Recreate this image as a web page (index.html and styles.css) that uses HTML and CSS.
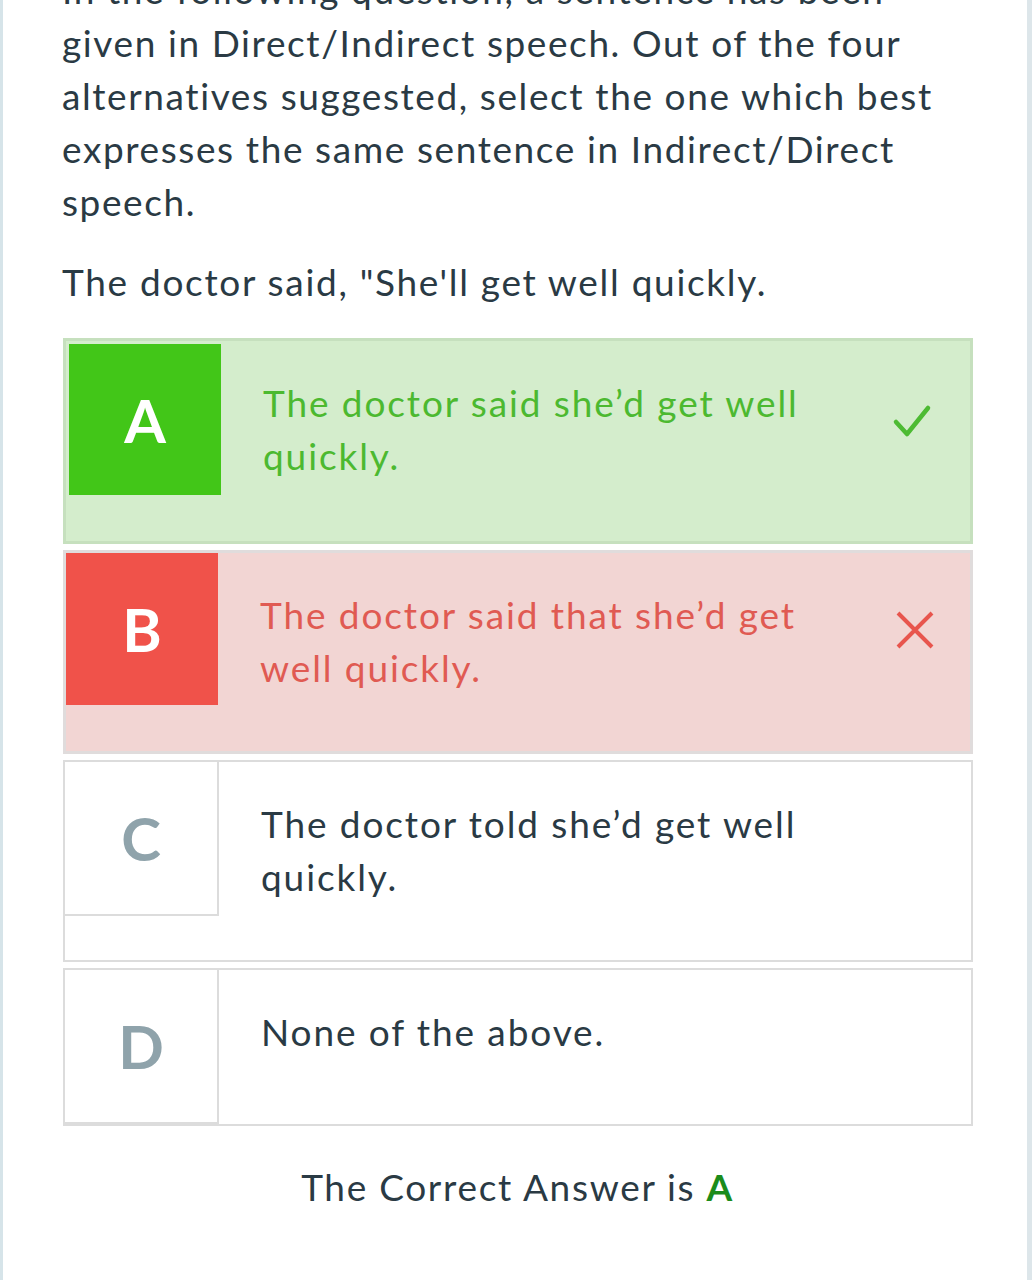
FILE: index.html
```html
<!DOCTYPE html>
<html>
<head>
<meta charset="utf-8">
<link rel="stylesheet" href="styles.css">
</head>
<body>
<div class="page">
  <div class="content">
    <p class="instr">In the following question, a sentence has been<br>given in Direct/Indirect speech. Out of the four<br>alternatives suggested, select the one which best<br>expresses the same sentence in Indirect/Direct<br>speech.</p>
    <p class="question">The doctor said, "She'll get well quickly.</p>
    <div class="options">
      <div class="opt opt-correct">
        <div class="letter">A</div>
        <div class="text">The doctor said she’d get well<br>quickly.</div>
        <div class="mark">
          <svg width="40" height="40" viewBox="0 0 40 40"><path d="M4 20 L15 32 L36 6" fill="none" stroke="#4dbb33" stroke-width="4.5" stroke-linecap="round" stroke-linejoin="round"/></svg>
        </div>
      </div>
      <div class="opt opt-wrong">
        <div class="letter">B</div>
        <div class="text">The doctor said that she’d get<br>well quickly.</div>
        <div class="mark">
          <svg width="40" height="40" viewBox="0 0 40 40"><path d="M3 3 L37 37 M37 3 L3 37" fill="none" stroke="#e8554d" stroke-width="4"/></svg>
        </div>
      </div>
      <div class="opt">
        <div class="letter">C</div>
        <div class="text">The doctor told she’d get well<br>quickly.</div>
        <div class="mark"></div>
      </div>
      <div class="opt">
        <div class="letter">D</div>
        <div class="text">None of the above.</div>
        <div class="mark"></div>
      </div>
    </div>
    <p class="answer">The Correct Answer is <b>A</b></p>
  </div>
</div>
</body>
</html>
```

FILE: styles.css
```css
html, body {
  margin: 0;
  padding: 0;
  background: #ffffff;
}
body {
  font-family: Lato, "Noto Sans", sans-serif;
  color: #2a3a44;
  overflow: hidden;
}
.page {
  width: 1032px;
  height: 1280px;
  box-sizing: border-box;
  border-left: 3px solid #d6e4e9;
  border-right: 5px solid #dde6ea;
  background: #fff;
  overflow: hidden;
}
.content {
  padding-left: 59px;
  width: 911px;
}
.instr {
  margin: -37px 0 0 0;
  font-size: 37px;
  line-height: 53px;
  letter-spacing: 1.6px;
  white-space: nowrap;
}
.question {
  margin: 27px 0 0 0;
  font-size: 37px;
  line-height: 53px;
  letter-spacing: 1.7px;
  white-space: nowrap;
}
.options {
  margin-top: 30px;
  margin-left: 1px;
  display: flex;
  flex-direction: column;
  gap: 6px;
}
.opt {
  display: flex;
  align-items: flex-start;
  border: 2px solid #dcdcdc;
  background: #fff;
}
.letter {
  width: 154px;
  height: 154px;
  flex: none;
  display: flex;
  align-items: center;
  justify-content: center;
  font-size: 60px;
  font-weight: 700;
  color: #8fa3ab;
  box-sizing: border-box;
  border-right: 2px solid #dcdcdc;
  border-bottom: 2px solid #dcdcdc;
}
.text {
  flex: 1;
  padding: 35px 0 57px 42px;
  font-size: 37px;
  line-height: 53px;
  letter-spacing: 1.9px;
  white-space: nowrap;
  color: #2a3a44;
}
.mark {
  width: 40px;
  flex: none;
  padding-top: 64px;
  margin-right: 38px;
}
.opt-correct {
  border: 3px solid #c6e0be;
  background: #d4edcc;
  padding: 3px 0 0 3px;
}
.opt-correct .letter {
  width: 152px;
  height: 151px;
  background: #42c618;
  color: #fff;
  border: none;
}
.opt-correct .text {
  color: #4cb930;
  padding-top: 32px;
  padding-bottom: 59px;
}
.opt-correct .mark {
  padding-top: 58px;
}
.opt-wrong {
  border: 3px solid #e0dcdc;
  background: #f2d5d3;
}
.opt-wrong .letter {
  width: 152px;
  height: 152px;
  background: #f0524a;
  color: #fff;
  border: none;
}
.opt-wrong .text {
  color: #e05a52;
}
.opt-wrong .mark {
  padding-top: 57px;
  margin-right: 35px;
}
.answer {
  margin: 34px 0 0 0;
  text-align: center;
  font-size: 37px;
  line-height: 53px;
  letter-spacing: 1.7px;
}
.answer b {
  color: #1b8c1b;
  font-weight: 700;
}
```
